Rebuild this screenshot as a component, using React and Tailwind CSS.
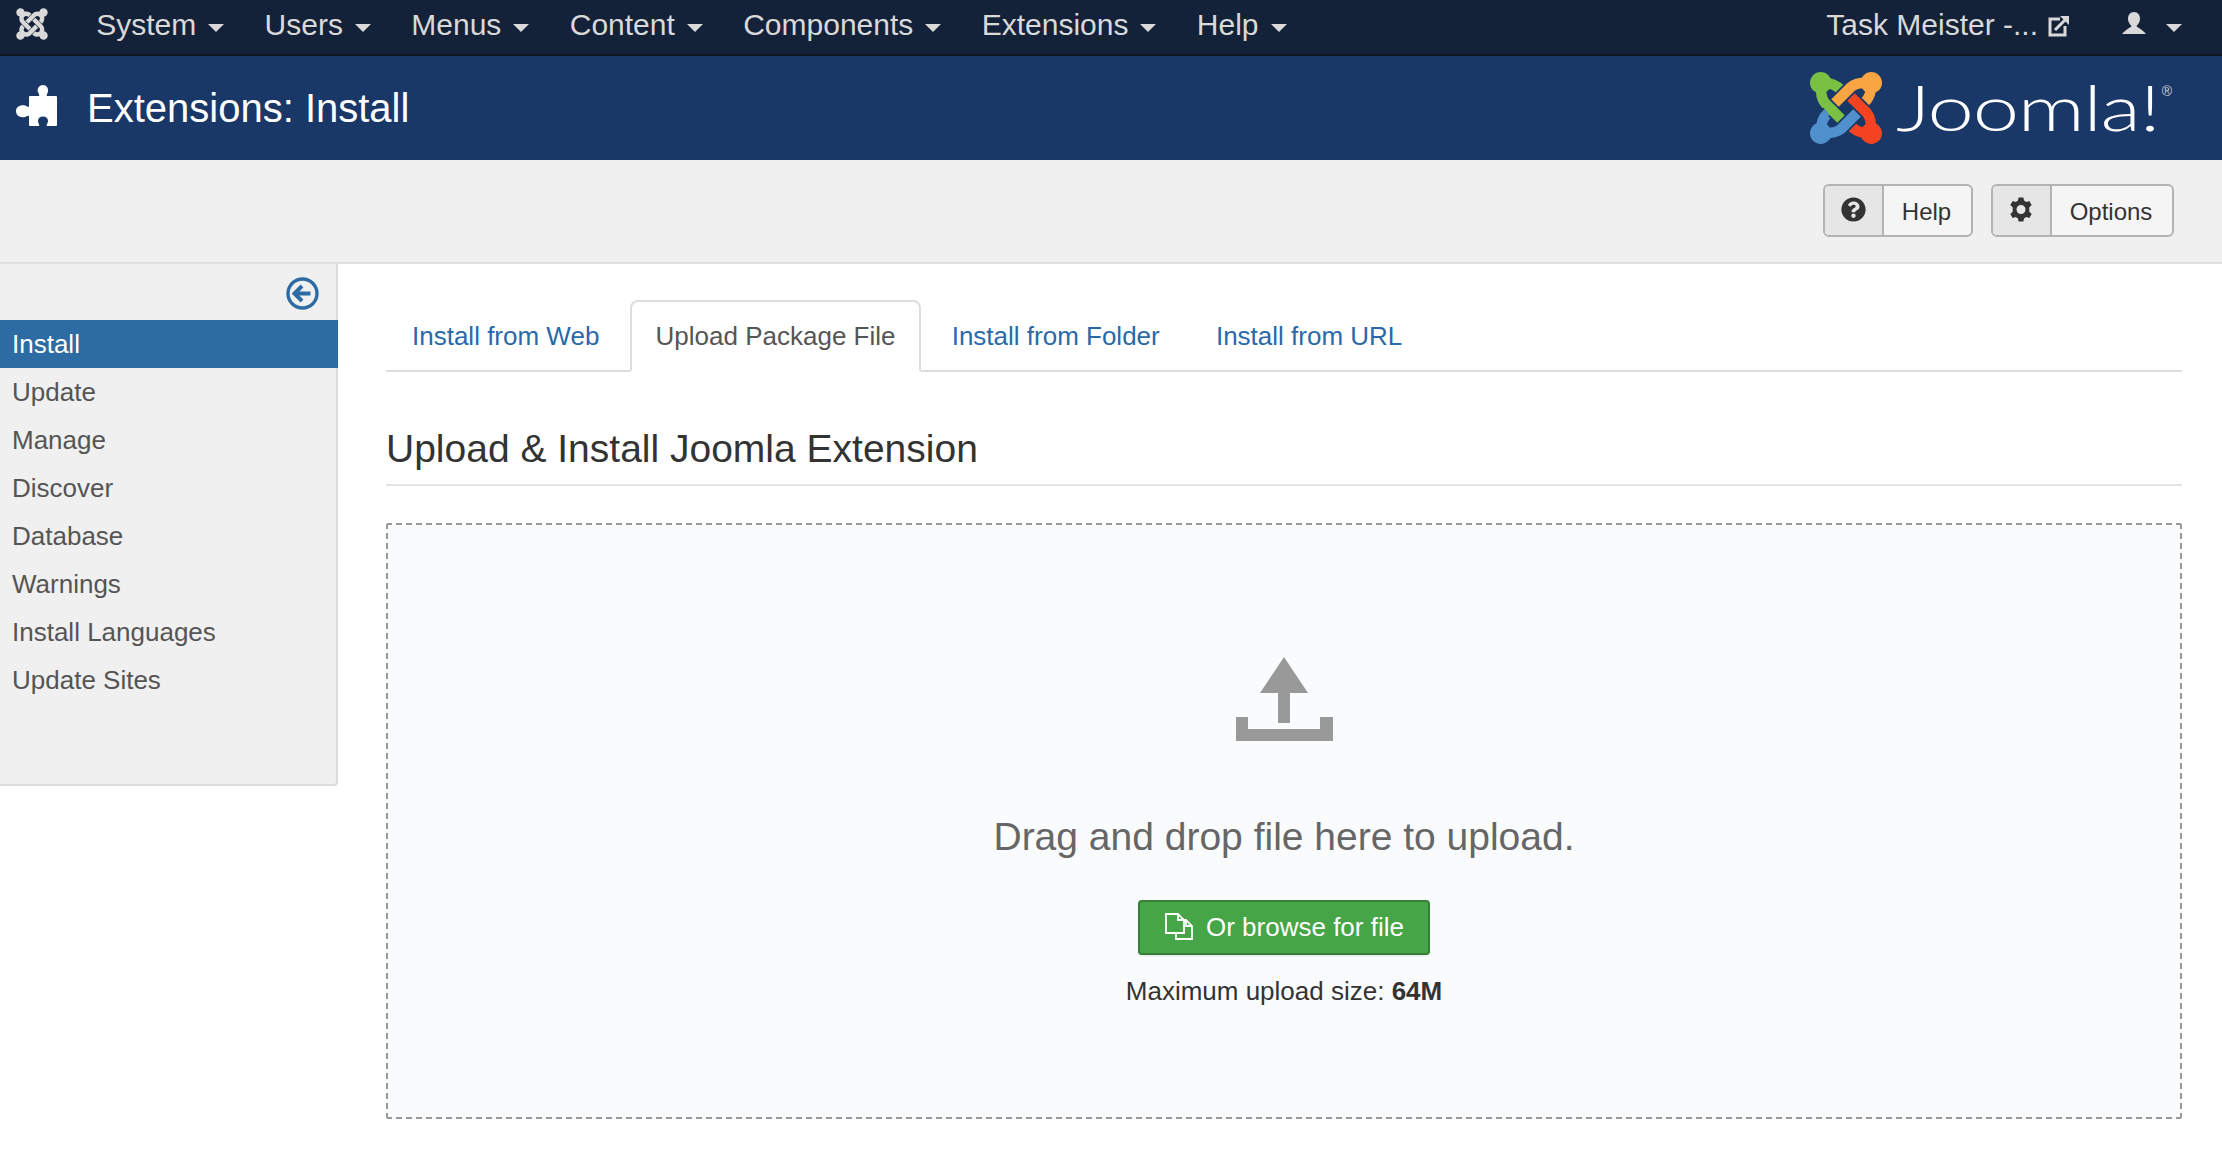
import React from "react";
import { FaJoomla, FaQuestionCircle } from "react-icons/fa";

const Caret = ({ className = "" }) => (
  <span className={`inline-block w-0 h-0 border-x-[8px] border-x-transparent border-t-[8px] border-t-[#d9d9d9] ${className}`} />
);

const NavItem = ({ label }) => (
  <div className="flex items-center px-[20.2px] h-full">
    <span className="mb-[5px]">{label}</span>
    <Caret className="ml-[12px] mt-[2px]" />
  </div>
);

const Arm = ({ rotate, color, bg = "#1a3867" }) => (
  <g transform={`rotate(${rotate} 36 36)`}>
    <path d="M31 47 L15 31 Q10 25 11 11 Q24 10 31 18" fill="none" stroke={bg} strokeWidth="14" strokeLinecap="butt" />
    <path d="M31 47 L15 31 Q10 25 11 11 Q24 10 31 18" fill="none" stroke={color} strokeWidth="10.5" strokeLinecap="butt" />
    <circle cx="10.7" cy="10.7" r="10.7" fill={color} />
  </g>
);

const JoomlaMark = () => (
  <svg width="72" height="72" viewBox="0 0 72 72">
    <Arm rotate={0} color="#7ac143" />
    <Arm rotate={90} color="#f9a541" />
    <Arm rotate={180} color="#f44321" />
    <Arm rotate={270} color="#5091cd" />
    <g>
      <path d="M31 47 L23 39" fill="none" stroke="#1a3867" strokeWidth="14" />
      <path d="M31 47 L21 37" fill="none" stroke="#7ac143" strokeWidth="10.5" />
    </g>
  </svg>
);

const Puzzle = () => (
  <svg width="42" height="42" viewBox="0 0 42 42" fill="#fff">
    <path d="M15 12 H24 C25 11 23.5 9.5 22.8 8 C22 4 24.5 1 28 1 C31.5 1 33.7 4 33 8 C32.5 9.5 31 11 32 12 H41 Q42 12 42 13 V41 Q42 42 41 42 H32 C31 41 33 39 33 37 C33 34 31 32.5 28 32.5 C25 32.5 23 34 23 37 C23 39 25 41 24 42 H15 Q14 42 14 41 V32 C13 31 11.5 32.5 10 33 C5 34 1 31.5 1 27 C1 23 5 20.5 10 21.5 C11.5 22 13 23.5 14 22.5 V13 Q14 12 15 12 Z" />
  </svg>
);

const Gear = () => (
  <svg className="mr-[2px]" width="24" height="25" viewBox="0 0 24 25" fill="#333">
    <path
      fillRule="evenodd"
      d="M9.6 0.5 H14.4 L15 3.6 L17.3 4.9 L20.3 3.9 L22.7 8.1 L20.3 10.2 V14.8 L22.7 16.9 L20.3 21.1 L17.3 20.1 L15 21.4 L14.4 24.5 H9.6 L9 21.4 L6.7 20.1 L3.7 21.1 L1.3 16.9 L3.7 14.8 V10.2 L1.3 8.1 L3.7 3.9 L6.7 4.9 L9 3.6 Z M12 8 A4.5 4.5 0 1 0 12 17 A4.5 4.5 0 1 0 12 8 Z"
    />
  </svg>
);

const ToolButton = ({ icon, label, iconW, w }) => (
  <div className={`flex h-[53px] rounded-[6px] border-2 border-[#b3b3b3] bg-[#f5f5f5] overflow-hidden ${w}`}>
    <div className={`flex items-center justify-center bg-[#e6e6e6] border-r-2 border-r-[#b3b3b3] pb-[2px] text-[#333] ${iconW}`}>{icon}</div>
    <div className="flex-1 flex items-center justify-center text-[24px] text-[#333] pt-[3px] pr-[2px]">{label}</div>
  </div>
);

const menu = ["Update", "Manage", "Discover", "Database", "Warnings", "Install Languages", "Update Sites"];

export default function App() {
  return (
    <div className="font-['Liberation_Sans',Arial,sans-serif] min-h-[1156px] bg-white text-[26px] text-[#333] overflow-hidden">
      {/* top nav */}
      <div className="h-[56px] bg-[#132139] border-b-2 border-b-[#0c1422] flex items-center text-[30px] text-[#d9d9d9]">
        <div className="w-[76px] pl-[14px] flex items-center pb-[6px]">
          <FaJoomla size={36} color="#d9d9d9" />
        </div>
        <NavItem label="System" />
        <NavItem label="Users" />
        <NavItem label="Menus" />
        <NavItem label="Content" />
        <NavItem label="Components" />
        <NavItem label="Extensions" />
        <NavItem label="Help" />
        <div className="ml-auto flex items-center">
          <span className="mb-[5px]">Task Meister -...</span>
          <svg className="ml-[10px] mb-[2px]" width="22" height="22" viewBox="0 0 22 22" fill="none" stroke="#d9d9d9" strokeWidth="3">
            <path d="M12 4 H2 V20 H17 V11" />
            <path d="M7 15 L19 3" />
            <path d="M12 1 L21 1 L21 10 Z" fill="#d9d9d9" stroke="none" />
          </svg>
          <svg className="ml-[52px] mb-[8px]" width="24" height="22" viewBox="0 0 24 22" fill="#d9d9d9">
            <path d="M12 0 C8 0 6 3 6 7 C6 10 8 12.5 9.5 14 C9.5 15.5 5 16 0 22 H24 C19 16 14.5 15.5 14.5 14 C16 12.5 18 10 18 7 C18 3 16 0 12 0 Z" />
          </svg>
          <Caret className="ml-[20px] mr-[40px] mt-[2px]" />
        </div>
      </div>

      {/* title bar */}
      <div className="h-[104px] bg-[#1a3867] flex items-center text-white">
        <div className="ml-[15px] mb-[6px]"><Puzzle /></div>
        <h1 className="ml-[30px] text-[40px] font-normal">Extensions: Install</h1>
        <div className="ml-auto mr-[50px] flex items-center">
          <JoomlaMark />
          <div className="relative ml-[14px] h-[72px] w-[276px]">
            <span className="inline-block origin-left scale-x-[1.3] font-['Lato',sans-serif] font-light text-[64px] leading-[70px] tracking-[-1px] text-white">Joomla!</span>
            <span className="absolute right-[0px] top-[12px] text-[14px] leading-none text-[#cdd5e2]">®</span>
          </div>
        </div>
      </div>

      {/* toolbar */}
      <div className="h-[104px] bg-[#f0f0f0] border-b-2 border-b-[#e0e0e0] flex items-start justify-end pt-[24px] pr-[48px] gap-[18px]">
        <ToolButton w="w-[150px]" iconW="w-[59px]" label="Help" icon={<FaQuestionCircle size={25} />} />
        <ToolButton w="w-[183px]" iconW="w-[59px]" label="Options" icon={<Gear />} />
      </div>

      <div className="flex items-start">
        {/* sidebar */}
        <aside className="w-[338px] h-[522px] shrink-0 bg-[#f0f0f0] border-r-2 border-b-2 border-[#dcdcdc] rounded-br-[4px]">
          <div className="h-[56px] flex items-center justify-end pr-[17px] pt-[2px]">
            <svg width="33" height="33" viewBox="0 0 33 33" fill="none" stroke="#2d6ca2">
              <circle cx="16.5" cy="16.5" r="14.5" strokeWidth="3.4" />
              <path d="M24.5 16.5 H9 M16 9 L8.5 16.5 L16 24" strokeWidth="4" />
            </svg>
          </div>
          <div className="h-[48px] -mr-[2px] bg-[#2d6ca2] text-white flex items-center pl-[12px]">Install</div>
          {menu.map((m) => (
            <div key={m} className="h-[48px] flex items-center pl-[12px] text-[#555]">{m}</div>
          ))}
        </aside>

        {/* content */}
        <main className="flex-1 pl-[48px] pr-[40px] pt-[36px]">
          <div className="flex h-[72px] border-b-2 border-b-[#dddddd] gap-[4.2px]">
            <div className="h-[72px] px-[26px] flex items-center text-[#2a69a8]">Install from Web</div>
            <div className="h-[72px] px-[24px] flex items-center bg-white border-2 border-[#dddddd] border-b-white rounded-t-[8px] text-[#555]">Upload Package File</div>
            <div className="h-[72px] px-[26px] flex items-center text-[#2a69a8]">Install from Folder</div>
            <div className="h-[72px] px-[26px] flex items-center text-[#2a69a8]">Install from URL</div>
          </div>

          <h2 className="mt-[32px] h-[82px] border-b-2 border-b-[#e5e5e5] text-[39px] leading-[90px] font-normal text-[#333]">Upload &amp; Install Joomla Extension</h2>

          <div className="mt-[37px] h-[596px] border-2 border-dashed border-[#999] bg-[#fafbfd] rounded-[2px] flex flex-col items-center">
            <svg className="mt-[132px]" width="97" height="84" viewBox="0 0 97 84" fill="#999">
              <path d="M48 0 L72 36 H54 V66 H42 V36 H24 Z" />
              <path d="M0 60 H12 V72 H84 V60 H97 V84 H0 Z" />
            </svg>
            <div className="mt-[72px] text-[39px] leading-[48px] text-[#666]">Drag and drop file here to upload.</div>
            <div className="mt-[39px] w-[292px] h-[55px] flex items-center rounded-[4px] bg-[#46a546] border-2 border-[#378137] text-white shadow-[0_1px_2px_rgba(0,0,0,0.1)]">
              <svg className="ml-[25px] mb-[2px]" width="28" height="27" viewBox="0 0 28 27" fill="none" stroke="#fff" strokeWidth="1.8">
                <path d="M1 1 H13 L19 7 V20 H1 Z" />
                <path d="M13 1 V7 H19" />
                <path d="M19 7 H21 L27 13 V26 H11 V20" />
                <path d="M21 7 V13 H27" />
              </svg>
              <span className="ml-[13px]">Or browse for file</span>
            </div>
            <div className="mt-[20px] text-[26px] leading-[32px] text-[#333]">Maximum upload size: <b>64M</b></div>
          </div>
        </main>
      </div>
    </div>
  );
}
